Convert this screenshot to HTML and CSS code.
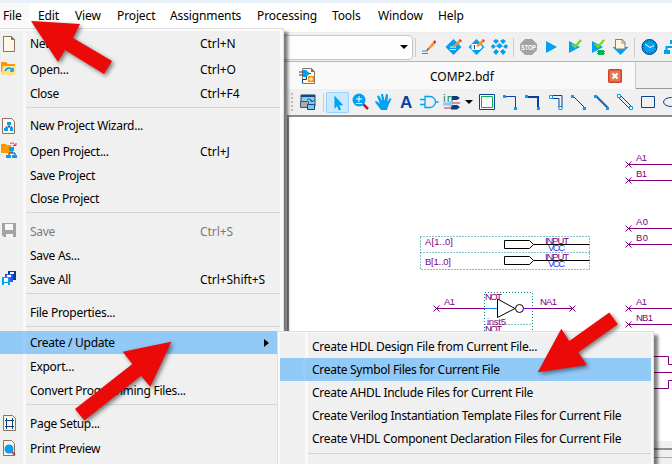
FILE: index.html
```html
<!DOCTYPE html>
<html lang="en">
<head>
<meta charset="utf-8">
<title>COMP2.bdf</title>
<link rel="stylesheet" href="styles.css">
</head>
<body>
<div class="app">
  <div class="titlebar"></div>
  <nav class="menubar">
    <span class="active w-file">File</span><span class="w-edit">Edit</span><span class="w-view">View</span><span class="w-project">Project</span><span class="w-assign">Assignments</span><span class="w-proc">Processing</span><span class="w-tools">Tools</span><span class="w-window">Window</span><span>Help</span>
  </nav>
  <div class="toolbar main-tools">
    <div class="combo"><i class="caret"></i></div>
    <i class="sep first"></i>
    <svg viewBox="0 0 23 24"><path d="M3 16h6M3 18.500h6" stroke="#00a1f1"/><path d="M7 16l2-3 5-6 2 2-6 6z" fill="#f7931e"/><path d="M14 7l2-2 1 2-1 2z" fill="#d81b3c"/><path d="M7 16l2-3 1 1z" fill="#444"/></svg>
    <svg viewBox="0 0 23 24"><path d="M11.500 4l8 8-8 8-8-8z" fill="#00a1f1"/><path d="M8 12h6M8 14.500h6" stroke="#fff"/><path d="M11 11l6-6 2 2-6 5z" fill="#f7931e"/><path d="M17 5l1-1 2 2-1 1z" fill="#d81b3c"/></svg>
    <svg viewBox="0 0 23 24"><path d="M11.500 4l8 8-8 8-8-8z" fill="#00a1f1"/><path d="M6.500 9h8l3 3-3 3h-8z" fill="#fff"/><path d="M9.500 10v4" stroke="#174a8b"/><path d="M11 11l6-6 2 2-6 5z" fill="#f7931e"/><path d="M17 5l1-1 2 2-1 1z" fill="#d81b3c"/></svg>
    <svg viewBox="0 0 23 24"><g fill="#00a1f1"><path d="M8 4l3 2-3 3-3-3zM15 4l3 2-3 3-3-3zM11.500 8l3.500 3-3.500 2.500L8 11zM5 9l3 2.500L5 14l-2-2.500zM18 9l2 2.500-2 2.500-3-2.500zM8 14l3 2.500L8 20l-3-3zM15 14l3 3-3 3-3-3.500z"/></g></svg>
    <i class="sep"></i>
    <svg viewBox="0 0 23 24"><path d="M8 4h7l5 5v6l-5 5H8l-5-5V9z" fill="#a3a3a3"/><text x="4" y="15" class="stop" textLength="15" lengthAdjust="spacingAndGlyphs">STOP</text></svg>
    <svg viewBox="0 0 23 24"><path d="M6 6l11 6-11 6z" fill="#00a1f1"/></svg>
    <svg viewBox="0 0 23 24"><path d="M6 6l11 6-11 6z" fill="#00a1f1"/><path d="M9 9l3 3 6-7" stroke="#6edb1d" stroke-width="2.200" fill="none"/></svg>
    <svg viewBox="0 0 23 24"><path d="M6 6l11 6-11 6z" fill="#00a1f1"/><path d="M9 9l3 3 6-7" stroke="#6edb1d" stroke-width="2.200" fill="none"/><path d="M12 15h6v5h-6z" fill="#00c454"/><path d="M11 16.500h8M11 18.500h8" stroke="#008d3d" stroke-width=".7"/></svg>
    <svg viewBox="0 0 23 24"><path d="M3.500 12h16l-8 8z" fill="#00a1f1"/><path d="M6.500 4.500h7l2.500 3V14H6.500z" fill="#fff4de" stroke="#957a6d"/><path d="M13 5v3h3" fill="none" stroke="#957a6d"/></svg>
    <i class="sep"></i>
    <svg viewBox="0 0 23 24"><circle cx="11.500" cy="12" r="7.500" fill="#00a1f1" stroke="#063e7e"/><circle cx="11.500" cy="12" r="6" fill="none" stroke="#063e7e" stroke-dasharray="1 2.140"/><path d="M7 9l5 3.500 4-2" fill="none" stroke="#fff"/></svg>
    <svg viewBox="0 0 23 24"><path d="M9 5h7v4H9zM3 15h6v4H3z" fill="#00a1f1"/><path d="M5.500 15v-3H12V8" fill="none" stroke="#00a1f1" stroke-width="2"/></svg>
  </div>
  <div class="editor">
    <div class="tabs">
      <div class="tab">
        <svg class="doc" viewBox="0 0 18 18"><path d="M3.500 1.500h9l3 3v12h-12z" fill="#fff7e5" stroke="#8d7066"/><path d="M12 1v4h4z" fill="#8d7066"/><path d="M0 5h4M0 8h4M10 6.500h2M3.500 16v-3.500h4V9" stroke="#083f80" fill="none"/><path d="M4 3h3l4 3.500-4 3.500H4z" fill="#00a1f1"/><path d="M9 9h6v6H9z" fill="#ff9800"/><path d="M10 12h4M12 10v4" stroke="#fff"/></svg>
        <span>COMP2.bdf</span>
        <svg class="close" viewBox="0 0 14 14"><rect x=".75" y=".75" width="12.500" height="12.500" rx="1" fill="#e07b55" stroke="#d7402d" stroke-width="1.500"/><path d="M4.500 4.500l5 5M9.500 4.500l-5 5" stroke="#fff" stroke-width="2.200"/></svg>
      </div>
      <div class="tab-rest"></div>
    </div>
    <div class="toolbar draw-tools">
      <i class="grip"></i>
      <svg viewBox="0 0 23 24"><path d="M4 5h14v11H4z" fill="#84ccf3" stroke="#164675"/><path d="M4 5h14v2H4z" fill="#164675"/><path d="M3.500 11.500h8v6h-8z" fill="#aaa" stroke="#555"/><path d="M10.500 14.500h7v5h-7z" fill="#74cafa" stroke="#164675"/><path d="M10 10c2-2 4-1 5 2M13 10l2 2 2-2" fill="none" stroke="#164675"/></svg>
      <i class="sep"></i>
      <svg class="selected" viewBox="0 0 23 24"><path d="M8 4v15l3-3 2 5 2.500-1-2-5H18z" fill="#00a1f1"/></svg>
      <svg viewBox="0 0 23 24"><path d="M14 14l5 5" stroke="#bd1e2d" stroke-width="2.500"/><circle cx="10" cy="10" r="6.500" fill="#00a1f1"/><path d="M7 9h6M10 6v6M7 13.500h6" stroke="#fff"/></svg>
      <svg viewBox="0 0 23 24"><path d="M9 20l-6-8c0-1 2-1 3 0l2 2-3-8 2-.5L10 11 9 4h2l1.500 7L14 4l2 .5L15.500 12 18 8l1.500 1-3 6-1.500 5z" fill="#00a1f1"/></svg>
      <svg viewBox="0 0 23 24"><text x="5" y="18" class="tool-a">A</text></svg>
      <svg viewBox="0 0 23 24"><path d="M7 6.500h5a5.500 5.500 0 010 11H7zM2 9.500h5M2 14.500h5M17.500 12h3" fill="none" stroke="#00a1f1" stroke-width="1.300"/></svg>
      <svg viewBox="0 0 23 24"><text x="2" y="12" class="tool-in" textLength="10">in</text><path d="M11 6h5l3 2-3 2h-5zM10 15h6l3 2-3 2.500h-6z" fill="#073f7c"/><path d="M2 14h6l3-2M8 14l3 2" stroke="#84ccf3" stroke-width="3" fill="none"/><path d="M11 13h8M3 18h7" stroke="#d92742"/></svg>
      <i class="dropdown"></i>
      <svg viewBox="0 0 23 24"><path d="M3.500 4.500h15v15h-15z" fill="#fff" stroke="#0b3f8f"/><path d="M5.500 6.500h11v11h-11z" fill="none" stroke="#00b34a"/></svg>
      <svg viewBox="0 0 23 24"><path d="M5 6.500h11.500V19" fill="none" stroke="#0b3f9f"/><path d="M4 5h3v3H4zM15 17h3v3h-3z" fill="#00a1f1"/></svg>
      <svg viewBox="0 0 23 24"><path d="M5 7h11v12" fill="none" stroke="#0b3f9f" stroke-width="2"/><path d="M3 5h3v3H3zM15 17h3v3h-3z" fill="#00a1f1"/></svg>
      <svg viewBox="0 0 23 24"><path d="M6 5.500h11V18M6 8.500h8V18" fill="none" stroke="#0b3f9f"/><path d="M4.500 5.500h3v3h-3zM14 16.500h3v3h-3z" fill="#fff" stroke="#00a1f1"/></svg>
      <svg viewBox="0 0 23 24"><path d="M5 6l12 12" stroke="#0b3f9f"/><path d="M3 5h3v3H3zM15 17h3v3h-3z" fill="#00a1f1"/></svg>
      <svg viewBox="0 0 23 24"><path d="M5 6l12 12" stroke="#315fb0" stroke-width="2.200"/><path d="M3 5h3v3H3zM15 17h3v3h-3z" fill="#00a1f1"/></svg>
      <svg viewBox="0 0 23 24"><path d="M6 5l12 12M4 7l12 12" stroke="#0b3f9f"/><path d="M3.500 4.500h3v3h-3zM15.500 16.500h3v3h-3z" fill="#fff" stroke="#00a1f1"/></svg>
      <svg viewBox="0 0 23 24"><path d="M4.500 6.500h13v11h-13z" fill="none" stroke="#0b3f8f"/></svg>
      <svg viewBox="0 0 23 24"><ellipse cx="11.500" cy="12" rx="8" ry="4.500" fill="none" stroke="#0b3f8f"/></svg>
    </div>
    <div class="canvas">
      <svg class="schematic" viewBox="289 117 383 324">
        <defs>
          <path id="x" d="M-3-3l6 6M3-3l-6 6"/>
          <path id="pin" d="M504.500 240.500h25l4 4-4 4h-25zM533.500 244.500h56"/>
        </defs>
        <g class="dots"><path d="M420.500 236.500h169v33h-169zM420.500 252.500h169M484.500 331V292.500h48V331M484.500 324.500h48"/></g>
        <g class="ink"><use href="#pin"/><use href="#pin" y="16"/><path d="M497.500 299v18.500l17.500-9z"/><circle cx="519.500" cy="308.500" r="4"/></g>
        <g class="wire">
          <path d="M436.500 308.500H485M532 308.500h40M628 164.500h44M628 180.500h44M628 228.500h44M628 244.500h44M628 308.500h44M628 324.500h44M652 356.500h16.500v8h4M652 372.500h20M652 388.500h16.500v-8h4"/>
          <use href="#x" x="436.500" y="308.500"/><use href="#x" x="572.500" y="308.500"/><use href="#x" x="628.500" y="164.500"/><use href="#x" x="628.500" y="180.500"/><use href="#x" x="628.500" y="228.500"/><use href="#x" x="628.500" y="244.500"/><use href="#x" x="628.500" y="308.500"/><use href="#x" x="628.500" y="324.500"/>
        </g>
        <path d="M485 308.500h12" stroke="#0080ff"/><path d="M523.500 308.500h9" stroke="#8000ff"/>
        <g class="label">
          <text x="425" y="245" textLength="28">A[1..0]</text><text x="425" y="265" textLength="26">B[1..0]</text>
          <text x="545" y="244" textLength="24">INPUT</text><text x="545" y="260" textLength="24">INPUT</text>
          <text x="444" y="305" textLength="11">A1</text><text x="540" y="305" textLength="17">NA1</text>
          <text x="485" y="300" textLength="17">NOT</text><text x="487" y="325" textLength="19">inst5</text><text x="485" y="332" textLength="17">NOT</text>
          <text x="636" y="161" textLength="11">A1</text><text x="636" y="177" textLength="11">B1</text><text x="636" y="225" textLength="12">A0</text><text x="636" y="241" textLength="12">B0</text><text x="636" y="305" textLength="11">A1</text><text x="636" y="321" textLength="17">NB1</text>
        </g>
        <g class="label vcc"><text x="548" y="251" textLength="17">VCC</text><text x="548" y="267" textLength="17">VCC</text></g>
      </svg>
    </div>
    <div class="status"></div>
  </div>
</div>

<div class="menu file-menu">
  <div class="item h25"><svg viewBox="0 0 18 18"><path d="M3.500 1.500h8l3 3v12h-11z" fill="#fff7e5" stroke="#8d7066"/><path d="M11 1v4h4z" fill="#8d7066"/></svg><span>New...</span><kbd>Ctrl+N</kbd></div>
  <div class="item"><svg viewBox="0 0 18 18"><path d="M1 2h5l2 2h7v3H4L1 14z" fill="#ff9800"/><path d="M3 6h13l-1 9H1z" fill="#ffe08a"/><path d="M5 11c2-4 6-4 8 0M10 11h3V8" fill="none" stroke="#00a1f1" stroke-width="1.500"/></svg><span>Open...</span><kbd>Ctrl+O</kbd></div>
  <div class="item"><i></i><span>Close</span><kbd>Ctrl+F4</kbd></div>
  <hr>
  <div class="item h25"><svg viewBox="0 0 18 18"><path d="M2.500 1.500h9l3 3v12h-12z" fill="#fff7e5" stroke="#8d7066"/><path d="M6 12v-2h6v2M9 10V7" fill="none" stroke="#083f80"/><path d="M7 5h4v3H7zM4 11h4v3H4zM10 11h3v3h-3z" fill="#00a1f1"/></svg><span>New Project Wizard...</span></div>
  <div class="item"><svg viewBox="0 0 18 18"><path d="M1 2h5l1 1h4v8H1z" fill="#ff9800"/><path d="M9 14v-3h6v3M12 11V8" fill="none" stroke="#083f80"/><path d="M9 5h5v4H9zM6 13h5v3H6zM12 13h5v3h-5z" fill="#00a1f1"/><path d="M10 2c2-2 4-1 5 1M13 3.500h3V1" fill="none" stroke="#e91e63"/></svg><span>Open Project...</span><kbd>Ctrl+J</kbd></div>
  <div class="item"><i></i><span>Save Project</span></div>
  <div class="item h23"><i></i><span>Close Project</span></div>
  <hr>
  <div class="item disabled"><svg viewBox="0 0 18 18"><path d="M2 1h14v14H4l-2-2z" fill="#a3a3a3"/><path d="M5 2h8v6H5zM6 12h7v3H6z" fill="#f7f7f7"/></svg><span>Save</span><kbd>Ctrl+S</kbd></div>
  <div class="item"><i></i><span>Save As...</span></div>
  <div class="item"><svg viewBox="0 0 18 18"><path d="M8 1h8v9H8z" fill="#063e8e"/><path d="M5 4h8v8H5z" fill="#2859ee"/><path d="M2 7h8v8H2z" fill="#00a1f1"/><path d="M10 2h4v2h-4zM7 5h4v2H7zM4 8h4v4H4zM4 13h4v2H4z" fill="#fff"/></svg><span>Save All</span><kbd>Ctrl+Shift+S</kbd></div>
  <hr>
  <div class="item"><i></i><span>File Properties...</span></div>
  <hr class="short">
  <div class="item h23 hot"><i></i><span>Create / Update</span><b class="sub-arrow"></b></div>
  <div class="item"><i></i><span>Export...</span></div>
  <div class="item"><i></i><span>Convert Programming Files...</span></div>
  <hr>
  <div class="item"><svg viewBox="0 0 18 18"><path d="M3.500 1.500h9l3 3v12h-12z" fill="#fff7e5" stroke="#8d7066"/><path d="M6.500 4v11M12.500 4v11M5 6.500h9M5 12.500h9" stroke="#083f80"/></svg><span>Page Setup...</span></div>
  <div class="item h26"><svg viewBox="0 0 18 18"><path d="M3.500 1.500h8l3 3v12h-11z" fill="#fff7e5" stroke="#8d7066"/><path d="M11 12l4 4" stroke="#c43b31" stroke-width="2"/><circle cx="9" cy="10" r="4.500" fill="#00a1f1"/></svg><span>Print Preview</span></div>
</div>

<div class="menu sub-menu">
  <div class="item"><i></i><span>Create HDL Design File from Current File...</span></div>
  <div class="item hot"><i></i><span>Create Symbol Files for Current File</span></div>
  <div class="item"><i></i><span>Create AHDL Include Files for Current File</span></div>
  <div class="item"><i></i><span>Create Verilog Instantiation Template Files for Current File</span></div>
  <div class="item"><i></i><span>Create VHDL Component Declaration Files for Current File</span></div>
  <hr>
</div>

<svg class="arrows" viewBox="0 0 672 464">
  <path d="M31 21l49 3-7 14 39 23-8 13-39-24-7 12z"/>
  <path d="M171.300 341.700l-48.600 10 9.600 12.300L75 409l9.300 11.500 56.700-44.800 9.300 11z"/>
  <path d="M537.700 372.300l23.600-43.600 8 12.300 40-28.500 8.500 11.800-39.500 28 8.400 12.700z"/>
</svg>
</body>
</html>
```
FILE: styles.css
```css
* { box-sizing: border-box; }
body {
  margin: 0;
  width: 672px;
  height: 464px;
  overflow: hidden;
  position: relative;
  background: #f0f0f0;
  color: #000;
  font: 12px/16px "Noto Sans", "Open Sans", sans-serif;
}
svg { display: block; flex: none; }
.app { display: flex; flex-direction: column; height: 464px; }
.titlebar { height: 3px; background: #eaf2f9; }
.menubar { display: flex; height: 30px; background: #fff; border-bottom: 1px solid #ececec; white-space: nowrap; letter-spacing: -.12px; }
.menubar span { line-height: 26px; flex: none; }
.menubar .active { background: #f9f9f9; padding-left: 3px; }
.w-file { width: 30px; margin-right: 8px; }
.w-edit { width: 37px; }
.w-view { width: 42px; }
.w-project { width: 53px; }
.w-assign { width: 87px; }
.w-proc { width: 75px; }
.w-tools { width: 46px; }
.w-window { width: 60px; }

.toolbar { display: flex; align-items: center; overflow: hidden; }
.toolbar > svg { width: 23px; height: 24px; }
.sep { flex: none; width: 6px; height: 19px; background: linear-gradient(#ccc, #ccc) center / 1px 100% no-repeat; }
.main-tools { height: 29px; border-bottom: 1px solid #b4b4b4; }
.combo { flex: none; display: flex; align-items: center; justify-content: flex-end; width: 412.500px; height: 25px; padding-right: 4px; background: #fdfdfd; border: 1px solid #c6c6c6; border-radius: 4px; }
.caret, .dropdown { border: 4px solid transparent; border-top-color: #000; border-bottom: 0; }
.dropdown { flex: none; margin: 0 3px 0 1px; }

.editor { display: flex; flex-direction: column; flex: 1; margin-left: 287px; }
.tabs { display: flex; height: 27px; }
.tab { display: flex; align-items: center; width: 349px; background: #f9f9f9; border-right: 1px solid #ccc; }
.tab-rest { flex: 1; border-bottom: 1px solid #999; }
.tab .doc { width: 18px; height: 18px; margin-left: 12px; }
.tab span { width: 178px; margin-left: 113px; padding-top: 2px; }
.tab .close { width: 14px; height: 14px; }
.draw-tools { height: 26px; }
.grip { flex: none; width: 2px; height: 18px; margin: 0 4px 0 4px; background: repeating-linear-gradient(#bbb 0 2px, transparent 2px 4px); }
.toolbar > .selected { height: 21px; background: #cce8ff; box-shadow: 0 0 0 1px #99d1ff inset; border-radius: 2px; }
.canvas { height: 326px; border-top: 2px solid #8a8a8a; border-left: 2px solid #8a8a8a; background: #fff; }
.schematic { width: 383px; height: 324px; }
.status { flex: 1; margin-top: 7px; border-top: 2px solid #909090; background: linear-gradient(#a8a8b8, #a8a8b8) 0 7px / 100% 1px no-repeat; }

.dots { fill: none; stroke: #008080; stroke-dasharray: 1 2; }
.ink { fill: #fff; stroke: #000; }
.wire { fill: none; stroke: #800080; }
.label { fill: #800080; font: 9.500px "Liberation Sans", Arial, sans-serif; }
.vcc { fill: #3030ff; }
.stop { fill: #fff; font: bold 8px "Liberation Sans", sans-serif; }
.tool-a { fill: #0b3f9f; font: bold 17px "Liberation Sans", sans-serif; }
.tool-in { fill: #087a37; font: 10px "DejaVu Sans", sans-serif; }

.menu { position: absolute; border: solid #fafafa; outline: 1px solid #dedede; outline-offset: -1px; box-shadow: 4px 4px 3px rgba(0, 0, 0, .5); white-space: nowrap; }
.file-menu { left: -4px; top: 28px; width: 288px; height: 445px; padding-top: 1px; border-width: 3px 4px; background: linear-gradient(90deg, #f0f0f0 23px, #f9f9f9 23px 26px, #f0f0f0 26px); }
.item { display: flex; align-items: center; height: 24px; }
.h23 { height: 23px; }
.h25 { height: 25px; }
.h26 { height: 26px; }
.item svg, .item i { flex: none; width: 18px; height: 18px; margin-right: 12px; }
.item span, .item kbd { padding-top: 1px; }
.item span { letter-spacing: -.28px; }
.item.h25 { padding-bottom: 2px; }
.file-menu .item span { width: 170px; }
.item kbd { font: inherit; letter-spacing: -.06px; }
.disabled { color: #7b7b7b; }
.hot { background: linear-gradient(90deg, #91c9f7 23px, #99cdf8 23px 26px, #91c9f7 26px); }
.menu hr { height: 9px; margin: 0 0 0 26px; border: 0; background: linear-gradient(#d3d3d3, #d3d3d3) 0 2px / 100% 1px no-repeat; }
.menu .short { height: 7px; }
.sub-arrow { margin-left: 64px; border: 4px solid transparent; border-left: 5px solid #000; border-right: 0; }
.sub-menu { left: 277px; top: 331px; width: 377px; height: 145px; padding-top: 2px; border-width: 2px 3px; background: linear-gradient(90deg, #f0f0f0 25px, #f9f9f9 25px 28px, #f0f0f0 28px); }
.sub-menu .item { height: 23px; }
.sub-menu .item i { margin-right: 14px; }
.sub-menu hr { margin-left: 28px; background-position: 0 3px; }
.arrows { position: absolute; left: 0; top: 0; width: 672px; height: 464px; fill: #eb0a08; filter: drop-shadow(2px 2px 2px rgba(0, 0, 0, .5)); }
```
